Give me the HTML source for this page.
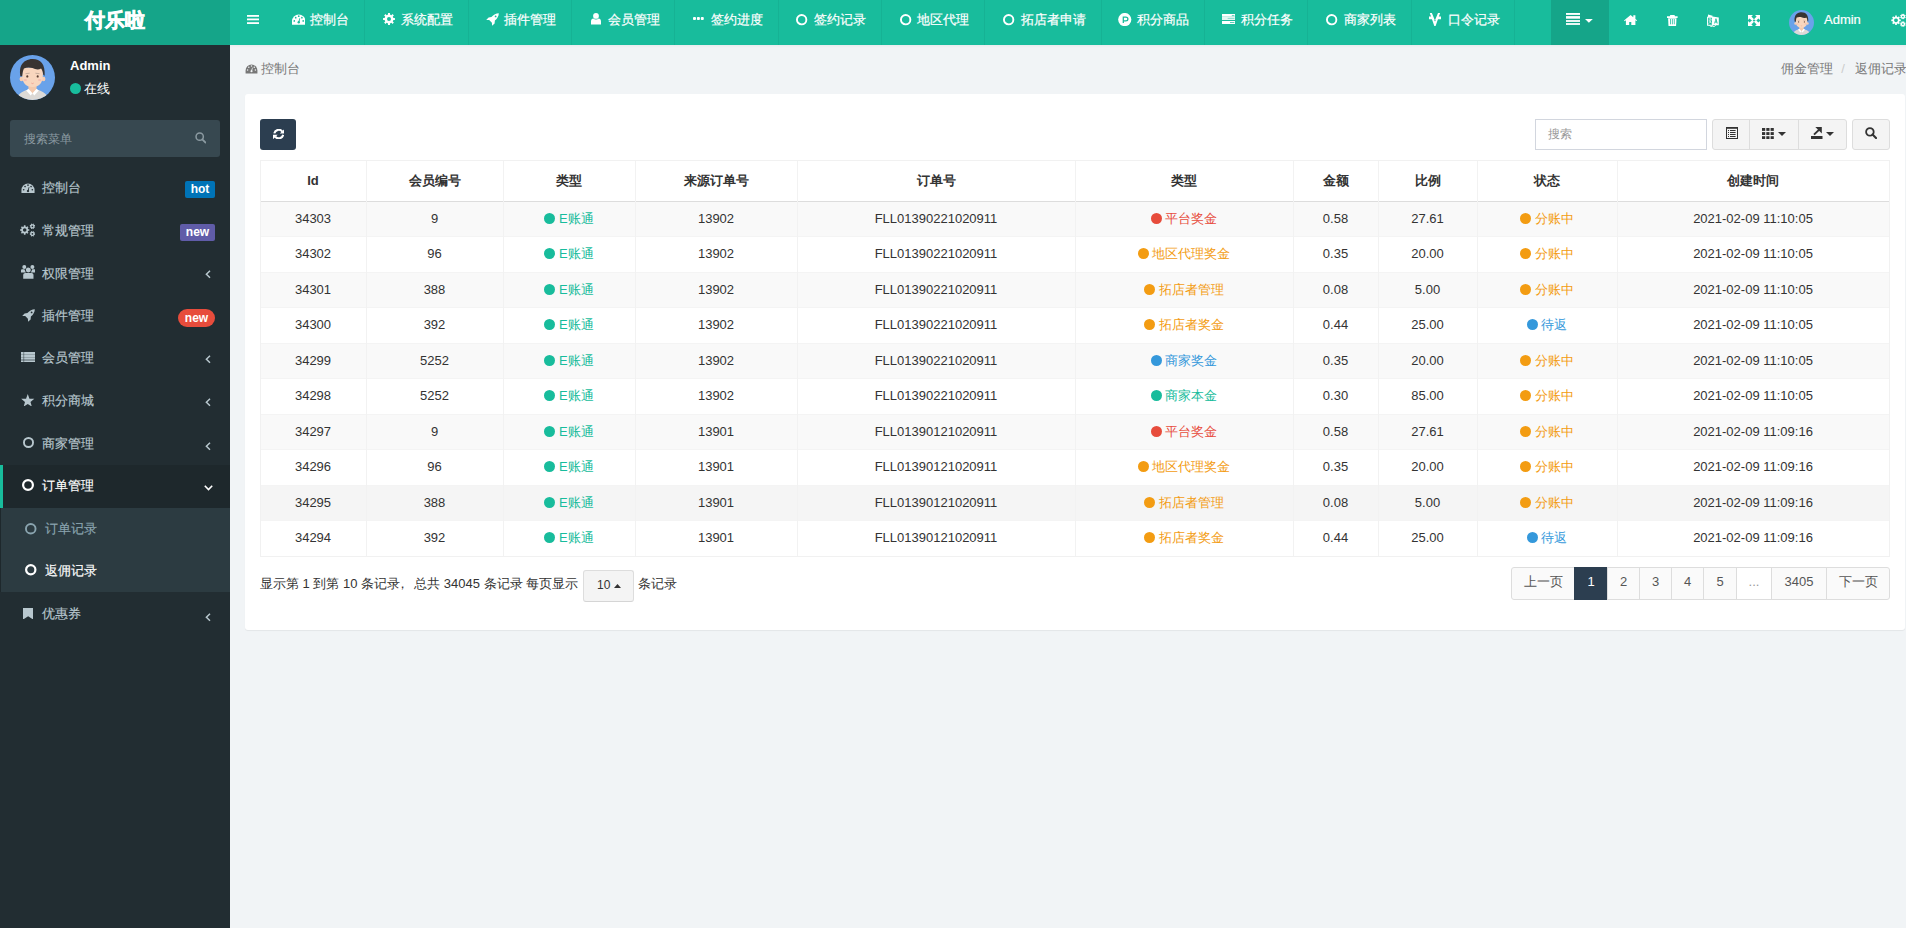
<!DOCTYPE html><html><head><meta charset="utf-8"><style>*{box-sizing:border-box;margin:0;padding:0}
html,body{width:1906px;height:928px;overflow:hidden}
body{font-family:"Liberation Sans",sans-serif;font-size:13px;color:#333;background:#f1f4f6;position:relative;line-height:1.42857}
.abs{position:absolute}
svg.abs{position:absolute;display:block}
#logo{-webkit-text-stroke:0.7px #fff;position:absolute;left:0;top:0;width:230px;height:45px;background:#15a589;color:#fff;font-size:20px;font-weight:bold;text-align:center;line-height:41px}
#nav{position:absolute;left:230px;top:0;width:1676px;height:45px;background:#18bc9c}
.sep{position:absolute;top:0;width:1px;height:45px;background:rgba(0,0,0,0.05)}
.nt{-webkit-text-stroke:0.2px currentColor;position:absolute;top:11.6px;color:#fff;line-height:15px;white-space:nowrap}
#side{position:absolute;left:0;top:45px;width:230px;height:883px;background:#222d32}
.mt{-webkit-text-stroke:0.15px currentColor;position:absolute;left:42px;color:#b8c7ce;line-height:16px;white-space:nowrap}
.lbl{position:absolute;height:17px;color:#fff;font-weight:bold;font-size:12px;line-height:17px;border-radius:2px;text-align:center}
.badge{position:absolute;height:18px;color:#fff;font-weight:bold;font-size:12px;line-height:18px;border-radius:9px;text-align:center}
#panel{position:absolute;left:245px;top:94px;width:1660px;height:536px;background:#fff;border-radius:3px;box-shadow:0 1px 1px rgba(0,0,0,.06)}
table{border-collapse:collapse;table-layout:fixed;position:absolute;left:260px;top:160px;width:1630px}
th,td{text-align:center;border:1px solid #f0f0f0;white-space:nowrap;padding:0}
th{height:42px;font-weight:bold;border-bottom:2px solid #ddd;line-height:15px}
td{height:35.57px;line-height:15px}
tbody tr:nth-child(odd) td{background:#f9f9f9}
.dot{display:inline-block;width:11px;height:11px;border-radius:50%;margin-right:3.6px;vertical-align:-1px}
.s{color:#18bc9c}.s .dot{background:#18bc9c}
.d{color:#e74c3c}.d .dot{background:#e74c3c}
.w{color:#f39c12}.w .dot{background:#f39c12}
.i{color:#3498db}.i .dot{background:#3498db}
.btn{position:absolute;border:1px solid #ddd;background:#f4f4f4;border-radius:3px}
.pg{position:absolute;top:567px;height:33px;border:1px solid #ddd;background:#fafafa;color:#555;text-align:center;line-height:28px}
.th{position:absolute;top:173px;text-align:center;font-weight:bold;line-height:15px;white-space:nowrap}
.td{position:absolute;text-align:center;line-height:15px;white-space:nowrap}
</style></head><body><div id="logo">付乐啦</div><div id="nav"></div><svg class="abs" style="left:247px;top:15px" width="12" height="10" viewBox="0 0 12 10" fill="#fff"><rect x="0" y="0" width="12" height="1.8"/><rect x="0" y="3.5" width="12" height="1.8"/><rect x="0" y="7.2" width="12" height="1.8"/></svg><div class="sep" style="left:364px"></div><svg class="abs" style="left:291.7px;top:14.2px" width="13.5" height="10.7" viewBox="0 0 13.5 10.7" fill="#fff"><path d="M0 10.7V7.3A6.75 6.75 0 0 1 13.5 7.3V10.7z"/><g fill="#18bc9c"><circle cx="6.75" cy="2.2" r="0.85"/><circle cx="3.7" cy="3.7" r="0.85"/><circle cx="9.9" cy="3.7" r="0.85"/><circle cx="2.3" cy="6.9" r="0.85"/><circle cx="11.2" cy="6.9" r="0.85"/><circle cx="6.75" cy="8.3" r="1.2"/><path d="M6.2 8.1L7.6 4 8.2 4.2 7.3 8.5z"/></g></svg><div class="nt" style="left:310px">控制台</div><div class="sep" style="left:468px"></div><svg class="abs" style="left:382.7px;top:13.4px" width="12" height="12" viewBox="0 0 12 12" fill="#fff"><path fill-rule="evenodd" d="M5.01 0.08 L6.99 0.08 L6.95 1.60 L8.44 2.22 L9.49 1.12 L10.88 2.51 L9.78 3.56 L10.40 5.05 L11.92 5.01 L11.92 6.99 L10.40 6.95 L9.78 8.44 L10.88 9.49 L9.49 10.88 L8.44 9.78 L6.95 10.40 L6.99 11.92 L5.01 11.92 L5.05 10.40 L3.56 9.78 L2.51 10.88 L1.12 9.49 L2.22 8.44 L1.60 6.95 L0.08 6.99 L0.08 5.01 L1.60 5.05 L2.22 3.56 L1.12 2.51 L2.51 1.12 L3.56 2.22 L5.05 1.60Z M6.00 4.00A2.0 2.0 0 1 0 6.00 8.00A2.0 2.0 0 1 0 6.00 4.00Z"/></svg><div class="nt" style="left:401px">系统配置</div><div class="sep" style="left:571px"></div><svg class="abs" style="left:486px;top:13.1px" width="13" height="13" viewBox="0 0 13 13" fill="#fff"><path d="M12.8 0.2C10.2 0.2 7.6 1.5 5.4 4.1L2.6 4.4 0.2 6.9 3.2 7.1 5.9 9.8 6.1 12.8 8.6 10.4 8.9 7.6C11.5 5.4 12.8 2.8 12.8 0.2z"/><circle cx="9.6" cy="3.4" r="0.9" fill="#18bc9c"/></svg><div class="nt" style="left:504px">插件管理</div><div class="sep" style="left:674px"></div><svg class="abs" style="left:591px;top:13.3px" width="10" height="11.5" viewBox="0 0 10 11.5" fill="#fff"><circle cx="5" cy="2.9" r="2.9"/><path d="M0 11.5V8.6C0 6.8 1 5.7 2.3 5.6 3 6.2 4 6.5 5 6.5S7 6.2 7.7 5.6C9 5.7 10 6.8 10 8.6V11.5z"/></svg><div class="nt" style="left:608px">会员管理</div><div class="sep" style="left:778px"></div><svg class="abs" style="left:693px;top:17.1px" width="11" height="3" viewBox="0 0 11 3" fill="#fff"><rect x="0" y="0" width="3" height="3" rx=".9"/><rect x="3.9" y="0" width="3" height="3" rx=".9"/><rect x="7.8" y="0" width="3" height="3" rx=".9"/></svg><div class="nt" style="left:711px">签约进度</div><div class="sep" style="left:881px"></div><svg class="abs" style="left:795.35px;top:12.60px" width="13.3" height="13.3" viewBox="0 0 13.3 13.3"><circle cx="6.65" cy="6.65" r="4.70" fill="none" stroke="#fff" stroke-width="1.9"/></svg><div class="nt" style="left:814px">签约记录</div><div class="sep" style="left:984px"></div><svg class="abs" style="left:899.05px;top:12.60px" width="13.3" height="13.3" viewBox="0 0 13.3 13.3"><circle cx="6.65" cy="6.65" r="4.70" fill="none" stroke="#fff" stroke-width="1.9"/></svg><div class="nt" style="left:917px">地区代理</div><div class="sep" style="left:1101px"></div><svg class="abs" style="left:1001.95px;top:12.60px" width="13.3" height="13.3" viewBox="0 0 13.3 13.3"><circle cx="6.65" cy="6.65" r="4.70" fill="none" stroke="#fff" stroke-width="1.9"/></svg><div class="nt" style="left:1021px">拓店者申请</div><div class="sep" style="left:1204px"></div><svg class="abs" style="left:1118.2px;top:12.7px" width="13.5" height="13.2" viewBox="0 0 13.5 13.2" fill="#fff"><circle cx="6.75" cy="6.55" r="6.6"/><path fill="none" stroke="#18bc9c" stroke-width="1.25" d="M5.3 10V4.1H7.8C9.1 4.1 9.9 4.8 9.9 6S9.1 7.9 7.8 7.9H5.3"/></svg><div class="nt" style="left:1137px">积分商品</div><div class="sep" style="left:1307px"></div><svg class="abs" style="left:1221.7px;top:13.9px" width="13.5" height="10" viewBox="0 0 13.5 10" fill="#fff"><rect x="0" y="0" width="13.5" height="2.2"/><rect x="0" y="2.2" width="13.5" height="3.8" opacity=".88"/><rect x="0" y="7" width="13.5" height="3"/><g fill="#18bc9c" opacity=".8"><rect x="9.8" y="1.2" width="2.6" height="0.9"/><rect x="5.7" y="3.9" width="6.7" height="0.9" opacity=".6"/><rect x="8" y="8.1" width="4.4" height="0.9"/></g></svg><div class="nt" style="left:1240.5px">积分任务</div><div class="sep" style="left:1411px"></div><svg class="abs" style="left:1324.85px;top:12.60px" width="13.3" height="13.3" viewBox="0 0 13.3 13.3"><circle cx="6.65" cy="6.65" r="4.70" fill="none" stroke="#fff" stroke-width="1.9"/></svg><div class="nt" style="left:1344px">商家列表</div><div class="sep" style="left:1514px"></div><svg class="abs" style="left:1429px;top:12.7px" width="12" height="13" viewBox="0 0 12 13" fill="#fff"><path d="M0.8 0H2.9L5.9 7.5 9 0H11.1L6.6 12.9H5.3z"/><path d="M0 3.4H3.6L4.5 6.3H0zM12 3.4H8.4L7.5 6.3H12z"/><path d="M0.9 0.3L2.6 0 2.9 1 1.6 1.6z"/><circle cx="6" cy="7.6" r=".7" fill="#18bc9c"/></svg><div class="nt" style="left:1448px">口令记录</div><div class="abs" style="left:1551px;top:0;width:58px;height:45px;background:#15a589"></div><svg class="abs" style="left:1566px;top:13px" width="14" height="12" viewBox="0 0 14 12" fill="#fff"><rect x="0" y="0" width="14" height="1.9"/><rect x="0" y="3.1" width="14" height="2.6"/><rect x="0" y="7.1" width="14" height="1.8"/><rect x="0" y="10.1" width="14" height="1.8"/></svg><svg class="abs" style="left:1585px;top:19px" width="7.8" height="3.8" viewBox="0 0 7.8 3.8" fill="#fff"><path d="M0 0H7.8L3.9 3.8z"/></svg><svg class="abs" style="left:1624px;top:14.9px" width="13.1" height="10" viewBox="0 0 13.1 10" fill="#fff"><path d="M6.6 0L0 5.4 0.7 6.2 1.9 5.2V10H5.2V6.9H7.3V10H11.4V5.2L12.4 6.1 13.1 5.3 11.4 3.9V0.2H9.3V2.2z"/></svg><svg class="abs" style="left:1667px;top:15px" width="10.6" height="11" viewBox="0 0 10.6 11" fill="#fff"><path d="M3.3 0H7.5L8 1.3H10.6V3H0V1.3H2.8z"/><path d="M1.1 3.2H9.5L9.1 11H1.5z"/><g fill="#18bc9c" opacity=".75"><rect x="3" y="4" width="1" height="5.3"/><rect x="4.9" y="4" width="1" height="5.3"/><rect x="6.8" y="4" width="1" height="5.3"/></g></svg><svg class="abs" style="left:1707px;top:13.9px" width="12" height="13" viewBox="0 0 12 13" fill="#fff"><path d="M1 0.5L5.6 1.8 5.4 3H0.9z" /><path d="M5.5 2.6L11.8 3.4V11.3H5.5z"/><path d="M0.6 3.3H5.5V11.3H0.6z" fill="none" stroke="#fff" stroke-width="1.1"/><path d="M7.2 9.6L8.5 4.4H9.4L10.7 9.6H9.8L9.5 8.4H8.3L8 9.6zM8.5 7.5H9.3L8.9 5.7z" fill="#18bc9c"/><path d="M1.9 5H4.4M3.1 4.4V5M2.2 6.1C2.6 7.7 3.5 8.6 4.6 9M4.1 5.2C3.9 7 3 8.6 1.8 9.6" fill="none" stroke="#fff" stroke-width=".75"/><path d="M2.6 11.4Q3.2 12.9 5.6 12.8 8 12.7 8.8 11.3" fill="none" stroke="#fff" stroke-width=".9"/></svg><svg class="abs" style="left:1748px;top:14.9px" width="12" height="11" viewBox="0 0 12 11" fill="#fff"><path d="M0 0H5L3.4 1.6 6 4.2 4.2 6 1.6 3.4 0 5zM12 0V5L10.4 3.4 7.8 6 6 4.2 8.6 1.6 7 0zM0 11V6L1.6 7.6 4.2 5 6 6.8 3.4 9.4 5 11zM12 11H7L8.6 9.4 6 6.8 7.8 5 10.4 7.6 12 6z"/></svg><svg class="abs" style="left:1789px;top:10px" width="25" height="25" viewBox="0 0 100 100"><defs><clipPath id="cpa"><circle cx="50" cy="50" r="50"/></clipPath></defs><g clip-path="url(#cpa)"><rect width="100" height="100" fill="#69a2ea"/><path d="M14 100C16 88 26 80 40 77H60C74 80 84 88 86 100z" fill="#dcd9d6"/><path d="M41 68H59V80L50 86 41 80z" fill="#f3c9ad"/><path d="M36 79L41 75 50 85 46 90zM64 79L59 75 50 85 54 90z" fill="#fff"/><ellipse cx="25.5" cy="53.5" rx="4.2" ry="5" fill="#f5cdb2"/><ellipse cx="74.5" cy="53.5" rx="4.2" ry="5" fill="#f5cdb2"/><path d="M27 28V45C27 62 35 71 50 71S73 62 73 45V28z" fill="#f8d6be"/><path d="M23 47C20 30 24 13 46 9 66 7 79 18 77 46L74 44C73 38 72 33 69 30 63 34 56 32 50 29 44 27 37 27 31 30 29 34 28 40 27 47z" fill="#383432"/><ellipse cx="38.5" cy="47.5" rx="2.2" ry="2.6" fill="#5a3e32"/><ellipse cx="61.5" cy="47.5" rx="2.2" ry="2.6" fill="#5a3e32"/><path d="M34.5 41.5L43.5 40.5M65.5 41.5L56.5 40.5" stroke="#9a8a80" stroke-width="1.2"/><ellipse cx="34" cy="55.5" rx="4" ry="2.3" fill="#f4b4ad" opacity=".7"/><ellipse cx="66" cy="55.5" rx="4" ry="2.3" fill="#f4b4ad" opacity=".7"/><path d="M47.5 62.5Q50 64.5 52.5 62.5" fill="none" stroke="#ec9486" stroke-width="1.6"/></g></svg><div class="nt" style="left:1824px">Admin</div><svg class="abs" style="left:1890.5px;top:13px" width="16" height="15" viewBox="0 0 16 15" fill="#fff"><path fill-rule="evenodd" d="M4.16 2.57 L5.84 2.57 L5.81 3.74 L6.94 4.21 L7.74 3.36 L8.94 4.56 L8.09 5.36 L8.56 6.49 L9.73 6.46 L9.73 8.14 L8.56 8.11 L8.09 9.24 L8.94 10.04 L7.74 11.24 L6.94 10.39 L5.81 10.86 L5.84 12.03 L4.16 12.03 L4.19 10.86 L3.06 10.39 L2.26 11.24 L1.06 10.04 L1.91 9.24 L1.44 8.11 L0.27 8.14 L0.27 6.46 L1.44 6.49 L1.91 5.36 L1.06 4.56 L2.26 3.36 L3.06 4.21 L4.19 3.74Z M5.00 5.48A1.8239999999999998 1.8239999999999998 0 1 0 5.00 9.12A1.8239999999999998 1.8239999999999998 0 1 0 5.00 5.48Z M14.73 4.12 L14.34 5.06 L13.75 4.81 L13.21 5.35 L13.46 5.94 L12.52 6.33 L12.28 5.73 L11.52 5.73 L11.28 6.33 L10.34 5.94 L10.59 5.35 L10.05 4.81 L9.46 5.06 L9.07 4.12 L9.67 3.88 L9.67 3.12 L9.07 2.88 L9.46 1.94 L10.05 2.19 L10.59 1.65 L10.34 1.06 L11.28 0.67 L11.52 1.27 L12.28 1.27 L12.52 0.67 L13.46 1.06 L13.21 1.65 L13.75 2.19 L14.34 1.94 L14.73 2.88 L14.13 3.12 L14.13 3.88Z M11.90 2.63A0.87 0.87 0 1 0 11.90 4.37A0.87 0.87 0 1 0 11.90 2.63Z M14.73 11.72 L14.34 12.66 L13.75 12.41 L13.21 12.95 L13.46 13.54 L12.52 13.93 L12.28 13.33 L11.52 13.33 L11.28 13.93 L10.34 13.54 L10.59 12.95 L10.05 12.41 L9.46 12.66 L9.07 11.72 L9.67 11.48 L9.67 10.72 L9.07 10.48 L9.46 9.54 L10.05 9.79 L10.59 9.25 L10.34 8.66 L11.28 8.27 L11.52 8.87 L12.28 8.87 L12.52 8.27 L13.46 8.66 L13.21 9.25 L13.75 9.79 L14.34 9.54 L14.73 10.48 L14.13 10.72 L14.13 11.48Z M11.90 10.23A0.87 0.87 0 1 0 11.90 11.97A0.87 0.87 0 1 0 11.90 10.23Z"/></svg><div id="side"></div><svg class="abs" style="left:10px;top:55px" width="45" height="45" viewBox="0 0 100 100"><defs><clipPath id="cpb"><circle cx="50" cy="50" r="50"/></clipPath></defs><g clip-path="url(#cpb)"><rect width="100" height="100" fill="#69a2ea"/><path d="M14 100C16 88 26 80 40 77H60C74 80 84 88 86 100z" fill="#dcd9d6"/><path d="M41 68H59V80L50 86 41 80z" fill="#f3c9ad"/><path d="M36 79L41 75 50 85 46 90zM64 79L59 75 50 85 54 90z" fill="#fff"/><ellipse cx="25.5" cy="53.5" rx="4.2" ry="5" fill="#f5cdb2"/><ellipse cx="74.5" cy="53.5" rx="4.2" ry="5" fill="#f5cdb2"/><path d="M27 28V45C27 62 35 71 50 71S73 62 73 45V28z" fill="#f8d6be"/><path d="M23 47C20 30 24 13 46 9 66 7 79 18 77 46L74 44C73 38 72 33 69 30 63 34 56 32 50 29 44 27 37 27 31 30 29 34 28 40 27 47z" fill="#383432"/><ellipse cx="38.5" cy="47.5" rx="2.2" ry="2.6" fill="#5a3e32"/><ellipse cx="61.5" cy="47.5" rx="2.2" ry="2.6" fill="#5a3e32"/><path d="M34.5 41.5L43.5 40.5M65.5 41.5L56.5 40.5" stroke="#9a8a80" stroke-width="1.2"/><ellipse cx="34" cy="55.5" rx="4" ry="2.3" fill="#f4b4ad" opacity=".7"/><ellipse cx="66" cy="55.5" rx="4" ry="2.3" fill="#f4b4ad" opacity=".7"/><path d="M47.5 62.5Q50 64.5 52.5 62.5" fill="none" stroke="#ec9486" stroke-width="1.6"/></g></svg><div class="abs" style="left:70px;top:58px;color:#fff;font-weight:bold;font-size:13px;line-height:16px">Admin</div><div class="abs" style="left:70px;top:82.5px;width:11px;height:11px;border-radius:50%;background:#18bc9c"></div><div class="abs" style="left:84px;top:81px;color:#fff;line-height:16px">在线</div><div class="abs" style="left:10px;top:120px;width:210px;height:37px;background:#374850;border-radius:3px"></div><div class="abs" style="left:24px;top:131px;color:#8b9aa1;font-size:12px;line-height:16px">搜索菜单</div><svg class="abs" style="left:194.5px;top:132.4px" width="11.5" height="11.5" viewBox="0 0 12 12"><circle cx="4.9" cy="4.9" r="3.8" fill="none" stroke="#8b9aa1" stroke-width="1.6"/><path d="M7.6 7.6L11 11" stroke="#8b9aa1" stroke-width="1.9000000000000001" stroke-linecap="round"/></svg><div class="mt" style="top:180px;left:42px">控制台</div><svg class="abs" style="left:20.9px;top:182.6px" width="14" height="10.4" viewBox="0 0 13.5 10.7" fill="#b8c7ce"><path d="M0 10.7V7.3A6.75 6.75 0 0 1 13.5 7.3V10.7z"/><g fill="#222d32"><circle cx="6.75" cy="2.2" r="0.85"/><circle cx="3.7" cy="3.7" r="0.85"/><circle cx="9.9" cy="3.7" r="0.85"/><circle cx="2.3" cy="6.9" r="0.85"/><circle cx="11.2" cy="6.9" r="0.85"/><circle cx="6.75" cy="8.3" r="1.2"/><path d="M6.2 8.1L7.6 4 8.2 4.2 7.3 8.5z"/></g></svg><div class="lbl" style="left:185px;top:181px;width:30px;background:#0073b7">hot</div><div class="mt" style="top:223px;left:42px">常规管理</div><svg class="abs" style="left:20.2px;top:223.2px" width="16" height="15" viewBox="0 0 16 15" fill="#b8c7ce"><path fill-rule="evenodd" d="M3.87 2.37 L5.53 2.37 L5.49 3.52 L6.60 3.98 L7.39 3.14 L8.56 4.31 L7.72 5.10 L8.18 6.21 L9.33 6.17 L9.33 7.83 L8.18 7.79 L7.72 8.90 L8.56 9.69 L7.39 10.86 L6.60 10.02 L5.49 10.48 L5.53 11.63 L3.87 11.63 L3.91 10.48 L2.80 10.02 L2.01 10.86 L0.84 9.69 L1.68 8.90 L1.22 7.79 L0.07 7.83 L0.07 6.17 L1.22 6.21 L1.68 5.10 L0.84 4.31 L2.01 3.14 L2.80 3.98 L3.91 3.52Z M4.70 5.21A1.786 1.786 0 1 0 4.70 8.79A1.786 1.786 0 1 0 4.70 5.21Z M15.13 3.90 L14.76 4.81 L14.18 4.56 L13.66 5.08 L13.91 5.66 L13.00 6.03 L12.77 5.45 L12.03 5.45 L11.80 6.03 L10.89 5.66 L11.14 5.08 L10.62 4.56 L10.04 4.81 L9.67 3.90 L10.25 3.67 L10.25 2.93 L9.67 2.70 L10.04 1.79 L10.62 2.04 L11.14 1.52 L10.89 0.94 L11.80 0.57 L12.03 1.15 L12.77 1.15 L13.00 0.57 L13.91 0.94 L13.66 1.52 L14.18 2.04 L14.76 1.79 L15.13 2.70 L14.55 2.93 L14.55 3.67Z M12.40 2.46A0.84 0.84 0 1 0 12.40 4.14A0.84 0.84 0 1 0 12.40 2.46Z M15.13 11.40 L14.76 12.31 L14.18 12.06 L13.66 12.58 L13.91 13.16 L13.00 13.53 L12.77 12.95 L12.03 12.95 L11.80 13.53 L10.89 13.16 L11.14 12.58 L10.62 12.06 L10.04 12.31 L9.67 11.40 L10.25 11.17 L10.25 10.43 L9.67 10.20 L10.04 9.29 L10.62 9.54 L11.14 9.02 L10.89 8.44 L11.80 8.07 L12.03 8.65 L12.77 8.65 L13.00 8.07 L13.91 8.44 L13.66 9.02 L14.18 9.54 L14.76 9.29 L15.13 10.20 L14.55 10.43 L14.55 11.17Z M12.40 9.96A0.84 0.84 0 1 0 12.40 11.64A0.84 0.84 0 1 0 12.40 9.96Z"/></svg><div class="lbl" style="left:180px;top:224px;width:35px;background:#605ca8">new</div><div class="mt" style="top:266px;left:42px">权限管理</div><svg class="abs" style="left:20.5px;top:265.4px" width="14.7" height="13.7" viewBox="0 0 14.7 13.7" fill="#b8c7ce"><circle cx="3.3" cy="2.1" r="2"/><circle cx="11.4" cy="2.1" r="2"/><circle cx="7.35" cy="4.9" r="2.5"/><path d="M0 7.6V5.6C0 4.7.6 4.3 1.2 4.3H3.4C3.9 5.5 4.4 6.4 4.9 7.6z"/><path d="M14.7 7.6V5.6C14.7 4.7 14.1 4.3 13.5 4.3H11.3C10.8 5.5 10.3 6.4 9.8 7.6z"/><path d="M2.2 13.7V10C2.2 8.6 3.1 7.9 4.2 7.9H10.5C11.6 7.9 12.5 8.6 12.5 10V13.7z"/></svg><svg class="abs" style="left:205px;top:270px" width="6" height="9" viewBox="0 0 6 9"><path d="M5 0.8L1.4 4.3 5 7.8" fill="none" stroke="#b8c7ce" stroke-width="1.5"/></svg><div class="mt" style="top:308px;left:42px">插件管理</div><svg class="abs" style="left:21.8px;top:309.2px" width="13" height="13" viewBox="0 0 13 13" fill="#b8c7ce"><path d="M12.8 0.2C10.2 0.2 7.6 1.5 5.4 4.1L2.6 4.4 0.2 6.9 3.2 7.1 5.9 9.8 6.1 12.8 8.6 10.4 8.9 7.6C11.5 5.4 12.8 2.8 12.8 0.2z"/><circle cx="9.6" cy="3.4" r="0.9" fill="#222d32"/></svg><div class="badge" style="left:178px;top:309px;width:37px;background:#e74c3c">new</div><div class="mt" style="top:350px;left:42px">会员管理</div><svg class="abs" style="left:21px;top:351.7px" width="14" height="10.3" viewBox="0 0 14 10.3" fill="#b8c7ce"><rect x="0" y="0" width="14" height="10.3"/><g fill="#222d32" opacity=".45"><rect x="0" y="2.3" width="14" height=".5"/><rect x="0" y="5.2" width="14" height=".5"/></g><rect x="0" y="7.6" width="14" height=".8" fill="#222d32" opacity=".8"/><rect x="2.3" y="0" width=".9" height="10.3" fill="#222d32" opacity=".5"/></svg><svg class="abs" style="left:205px;top:355px" width="6" height="9" viewBox="0 0 6 9"><path d="M5 0.8L1.4 4.3 5 7.8" fill="none" stroke="#b8c7ce" stroke-width="1.5"/></svg><div class="mt" style="top:393px;left:42px">积分商城</div><svg class="abs" style="left:21.2px;top:393.6px" width="13.5" height="12.5" viewBox="0 0 13.5 12.5" fill="#b8c7ce"><path d="M6.75 0.10 L8.45 4.65 L13.31 4.87 L9.51 7.90 L10.81 12.58 L6.75 9.90 L2.69 12.58 L3.99 7.90 L0.19 4.87 L5.05 4.65Z"/></svg><svg class="abs" style="left:205px;top:397.5px" width="6" height="9" viewBox="0 0 6 9"><path d="M5 0.8L1.4 4.3 5 7.8" fill="none" stroke="#b8c7ce" stroke-width="1.5"/></svg><div class="mt" style="top:436px;left:42px">商家管理</div><svg class="abs" style="left:21.50px;top:436.20px" width="13" height="13" viewBox="0 0 13 13"><circle cx="6.5" cy="6.5" r="4.55" fill="none" stroke="#b8c7ce" stroke-width="1.9"/></svg><svg class="abs" style="left:205px;top:441.5px" width="6" height="9" viewBox="0 0 6 9"><path d="M5 0.8L1.4 4.3 5 7.8" fill="none" stroke="#b8c7ce" stroke-width="1.5"/></svg><div class="abs" style="left:0;top:465px;width:230px;height:43px;background:#1e282c"></div><div class="abs" style="left:0;top:465px;width:3px;height:43px;background:#18bc9c"></div><div class="mt" style="top:478px;left:42px;color:#fff">订单管理</div><svg class="abs" style="left:21.00px;top:478.00px" width="14" height="14" viewBox="0 0 14 14"><circle cx="7.0" cy="7.0" r="4.90" fill="none" stroke="#fff" stroke-width="2.2"/></svg><svg class="abs" style="left:203.5px;top:484.5px" width="9" height="6" viewBox="0 0 9 6"><path d="M0.8 0.8L4.5 4.5 8.2 0.8" fill="none" stroke="#fff" stroke-width="1.6"/></svg><div class="abs" style="left:0;top:508px;width:230px;height:84px;background:#2c3b41"></div><div class="abs" style="left:0;top:508px;width:1px;height:84px;background:#1e282c"></div><div class="mt" style="top:521px;left:45px;color:#8aa4af">订单记录</div><svg class="abs" style="left:24.05px;top:521.95px" width="13.5" height="13.5" viewBox="0 0 13.5 13.5"><circle cx="6.75" cy="6.75" r="4.80" fill="none" stroke="#8aa4af" stroke-width="1.9"/></svg><div class="mt" style="top:563px;left:45px;color:#fff">返佣记录</div><svg class="abs" style="left:24.05px;top:562.95px" width="13.5" height="13.5" viewBox="0 0 13.5 13.5"><circle cx="6.75" cy="6.75" r="4.65" fill="none" stroke="#fff" stroke-width="2.2"/></svg><div class="mt" style="top:606px;left:42px">优惠券</div><svg class="abs" style="left:22.7px;top:607.5px" width="10.3" height="11.6" viewBox="0 0 10.3 11.6" fill="#b8c7ce"><path d="M0 0H10.3V11.6L5.15 8.3 0 11.6z"/></svg><svg class="abs" style="left:205px;top:612.5px" width="6" height="9" viewBox="0 0 6 9"><path d="M5 0.8L1.4 4.3 5 7.8" fill="none" stroke="#b8c7ce" stroke-width="1.5"/></svg><svg class="abs" style="left:245px;top:64.3px" width="13" height="9.4" viewBox="0 0 13.5 10.7" fill="#777"><path d="M0 10.7V7.3A6.75 6.75 0 0 1 13.5 7.3V10.7z"/><g fill="#f1f4f6"><circle cx="6.75" cy="2.2" r="0.85"/><circle cx="3.7" cy="3.7" r="0.85"/><circle cx="9.9" cy="3.7" r="0.85"/><circle cx="2.3" cy="6.9" r="0.85"/><circle cx="11.2" cy="6.9" r="0.85"/><circle cx="6.75" cy="8.3" r="1.2"/><path d="M6.2 8.1L7.6 4 8.2 4.2 7.3 8.5z"/></g></svg><div class="abs" style="left:261px;top:61px;color:#777;line-height:16px">控制台</div><div class="abs" style="left:1780.5px;top:60.5px;color:#777;line-height:16px;white-space:nowrap">佣金管理<span style="color:#ccc;padding:0 10px 0 8.7px">/</span>返佣记录</div><div class="abs" style="left:230px;top:45px;width:1676px;height:3px;background:linear-gradient(rgba(0,0,0,.035),rgba(0,0,0,0))"></div><div id="panel"></div><div class="abs" style="left:260px;top:119px;width:36px;height:31px;background:#2c3e50;border-radius:3px"></div><svg class="abs" style="left:272.6px;top:128.6px" width="11.5" height="10.4" viewBox="0 0 11.5 10.4" fill="#fff"><path d="M1.3 4.4A4.5 4.5 0 0 1 9.3 2.6" fill="none" stroke="#fff" stroke-width="2.1"/><path d="M6.8 4.4H11.5V0z"/><path d="M10.2 5.8A4.5 4.5 0 0 1 2.2 7.6" fill="none" stroke="#fff" stroke-width="2.1"/><path d="M4.7 5.8H0V10.2z"/></svg><div class="abs" style="left:1535px;top:119px;width:172px;height:31px;border:1px solid #d2d6de;background:#fff"></div><div class="abs" style="left:1548px;top:126px;color:#999;font-size:12px;line-height:16px">搜索</div><div class="btn" style="left:1712px;top:119px;width:135px;height:31px"></div><div class="abs" style="left:1749px;top:120px;width:1px;height:29px;background:#ddd"></div><div class="abs" style="left:1798px;top:120px;width:1px;height:29px;background:#ddd"></div><svg class="abs" style="left:1726px;top:127px" width="12" height="12" viewBox="0 0 12 12" fill="#333"><rect x=".5" y=".5" width="11" height="11" fill="none" stroke="#333" stroke-width="1"/><rect x="0" y="0" width="12" height="1.8"/><rect x="2" y="3" width="1" height="1"/><rect x="4" y="3" width="5.6" height="1"/><rect x="2" y="5" width="1" height="1"/><rect x="4" y="5" width="5.6" height="1"/><rect x="2" y="7" width="1" height="1"/><rect x="4" y="7" width="5.6" height="1"/><rect x="2" y="9" width="1" height="1"/><rect x="4" y="9" width="5.6" height="1"/></svg><svg class="abs" style="left:1762px;top:128px" width="12" height="11" viewBox="0 0 12 11" fill="#333"><rect x="0.0" y="0.0" width="3.2" height="2.9"/><rect x="0.0" y="4.1" width="3.2" height="2.9"/><rect x="0.0" y="8.2" width="3.2" height="2.9"/><rect x="4.3" y="0.0" width="3.2" height="2.9"/><rect x="4.3" y="4.1" width="3.2" height="2.9"/><rect x="4.3" y="8.2" width="3.2" height="2.9"/><rect x="8.6" y="0.0" width="3.2" height="2.9"/><rect x="8.6" y="4.1" width="3.2" height="2.9"/><rect x="8.6" y="8.2" width="3.2" height="2.9"/></svg><svg class="abs" style="left:1778px;top:132px" width="8" height="4" viewBox="0 0 8 4" fill="#333"><path d="M0 0H8L4.0 4z"/></svg><svg class="abs" style="left:1810.6px;top:127px" width="12" height="12" viewBox="0 0 12 12" fill="#333"><rect x="0" y="9" width="11.5" height="3"/><path d="M4.3 0H10.8V6.5z"/><path d="M8.2 2.6L3 7.6" stroke="#333" stroke-width="2"/></svg><svg class="abs" style="left:1826.3px;top:132px" width="8" height="4" viewBox="0 0 8 4" fill="#333"><path d="M0 0H8L4.0 4z"/></svg><div class="btn" style="left:1852px;top:119px;width:38px;height:31px"></div><svg class="abs" style="left:1865.2px;top:127px" width="12" height="12" viewBox="0 0 12 12"><circle cx="4.9" cy="4.9" r="3.8" fill="none" stroke="#333" stroke-width="1.8"/><path d="M7.6 7.6L11 11" stroke="#333" stroke-width="2.1" stroke-linecap="round"/></svg><div class="abs" style="left:260px;top:160px;width:1630px;height:397px;border:1px solid #f1f1f1;background:#fff"></div><div class="abs" style="left:261px;top:202px;width:1628px;height:34px;background:#f9f9f9"></div><div class="abs" style="left:261px;top:236px;width:1628px;height:1px;background:#f4f4f4"></div><div class="abs" style="left:261px;top:272px;width:1628px;height:1px;background:#f4f4f4"></div><div class="abs" style="left:261px;top:273px;width:1628px;height:34px;background:#f9f9f9"></div><div class="abs" style="left:261px;top:307px;width:1628px;height:1px;background:#f4f4f4"></div><div class="abs" style="left:261px;top:343px;width:1628px;height:1px;background:#f4f4f4"></div><div class="abs" style="left:261px;top:344px;width:1628px;height:34px;background:#f9f9f9"></div><div class="abs" style="left:261px;top:378px;width:1628px;height:1px;background:#f4f4f4"></div><div class="abs" style="left:261px;top:414px;width:1628px;height:1px;background:#f4f4f4"></div><div class="abs" style="left:261px;top:415px;width:1628px;height:34px;background:#f9f9f9"></div><div class="abs" style="left:261px;top:449px;width:1628px;height:1px;background:#f4f4f4"></div><div class="abs" style="left:261px;top:485px;width:1628px;height:1px;background:#f4f4f4"></div><div class="abs" style="left:261px;top:486px;width:1628px;height:34px;background:#f5f5f5"></div><div class="abs" style="left:261px;top:520px;width:1628px;height:1px;background:#f4f4f4"></div><div class="abs" style="left:261px;top:201px;width:1628px;height:1px;background:#ddd"></div><div class="abs" style="left:366px;top:161px;width:1px;height:395px;background:#f2f2f2"></div><div class="abs" style="left:503px;top:161px;width:1px;height:395px;background:#f2f2f2"></div><div class="abs" style="left:635px;top:161px;width:1px;height:395px;background:#f2f2f2"></div><div class="abs" style="left:797px;top:161px;width:1px;height:395px;background:#f2f2f2"></div><div class="abs" style="left:1075px;top:161px;width:1px;height:395px;background:#f2f2f2"></div><div class="abs" style="left:1293px;top:161px;width:1px;height:395px;background:#f2f2f2"></div><div class="abs" style="left:1378px;top:161px;width:1px;height:395px;background:#f2f2f2"></div><div class="abs" style="left:1477px;top:161px;width:1px;height:395px;background:#f2f2f2"></div><div class="abs" style="left:1617px;top:161px;width:1px;height:395px;background:#f2f2f2"></div><div class="th" style="left:260px;width:106px">Id</div><div class="th" style="left:366px;width:137px">会员编号</div><div class="th" style="left:503px;width:132px">类型</div><div class="th" style="left:635px;width:162px">来源订单号</div><div class="th" style="left:797px;width:278px">订单号</div><div class="th" style="left:1075px;width:218px">类型</div><div class="th" style="left:1293px;width:85px">金额</div><div class="th" style="left:1378px;width:99px">比例</div><div class="th" style="left:1477px;width:140px">状态</div><div class="th" style="left:1617px;width:272px">创建时间</div><div class="td" style="left:260px;width:106px;top:211px">34303</div><div class="td" style="left:366px;width:137px;top:211px">9</div><div class="td" style="left:503px;width:132px;top:211px"><span class="s"><i class="dot"></i>E账通</span></div><div class="td" style="left:635px;width:162px;top:211px">13902</div><div class="td" style="left:797px;width:278px;top:211px">FLL01390221020911</div><div class="td" style="left:1075px;width:218px;top:211px"><span class="d"><i class="dot"></i>平台奖金</span></div><div class="td" style="left:1293px;width:85px;top:211px">0.58</div><div class="td" style="left:1378px;width:99px;top:211px">27.61</div><div class="td" style="left:1477px;width:140px;top:211px"><span class="w"><i class="dot"></i>分账中</span></div><div class="td" style="left:1617px;width:272px;top:211px">2021-02-09 11:10:05</div><div class="td" style="left:260px;width:106px;top:246px">34302</div><div class="td" style="left:366px;width:137px;top:246px">96</div><div class="td" style="left:503px;width:132px;top:246px"><span class="s"><i class="dot"></i>E账通</span></div><div class="td" style="left:635px;width:162px;top:246px">13902</div><div class="td" style="left:797px;width:278px;top:246px">FLL01390221020911</div><div class="td" style="left:1075px;width:218px;top:246px"><span class="w"><i class="dot"></i>地区代理奖金</span></div><div class="td" style="left:1293px;width:85px;top:246px">0.35</div><div class="td" style="left:1378px;width:99px;top:246px">20.00</div><div class="td" style="left:1477px;width:140px;top:246px"><span class="w"><i class="dot"></i>分账中</span></div><div class="td" style="left:1617px;width:272px;top:246px">2021-02-09 11:10:05</div><div class="td" style="left:260px;width:106px;top:282px">34301</div><div class="td" style="left:366px;width:137px;top:282px">388</div><div class="td" style="left:503px;width:132px;top:282px"><span class="s"><i class="dot"></i>E账通</span></div><div class="td" style="left:635px;width:162px;top:282px">13902</div><div class="td" style="left:797px;width:278px;top:282px">FLL01390221020911</div><div class="td" style="left:1075px;width:218px;top:282px"><span class="w"><i class="dot"></i>拓店者管理</span></div><div class="td" style="left:1293px;width:85px;top:282px">0.08</div><div class="td" style="left:1378px;width:99px;top:282px">5.00</div><div class="td" style="left:1477px;width:140px;top:282px"><span class="w"><i class="dot"></i>分账中</span></div><div class="td" style="left:1617px;width:272px;top:282px">2021-02-09 11:10:05</div><div class="td" style="left:260px;width:106px;top:317px">34300</div><div class="td" style="left:366px;width:137px;top:317px">392</div><div class="td" style="left:503px;width:132px;top:317px"><span class="s"><i class="dot"></i>E账通</span></div><div class="td" style="left:635px;width:162px;top:317px">13902</div><div class="td" style="left:797px;width:278px;top:317px">FLL01390221020911</div><div class="td" style="left:1075px;width:218px;top:317px"><span class="w"><i class="dot"></i>拓店者奖金</span></div><div class="td" style="left:1293px;width:85px;top:317px">0.44</div><div class="td" style="left:1378px;width:99px;top:317px">25.00</div><div class="td" style="left:1477px;width:140px;top:317px"><span class="i"><i class="dot"></i>待返</span></div><div class="td" style="left:1617px;width:272px;top:317px">2021-02-09 11:10:05</div><div class="td" style="left:260px;width:106px;top:353px">34299</div><div class="td" style="left:366px;width:137px;top:353px">5252</div><div class="td" style="left:503px;width:132px;top:353px"><span class="s"><i class="dot"></i>E账通</span></div><div class="td" style="left:635px;width:162px;top:353px">13902</div><div class="td" style="left:797px;width:278px;top:353px">FLL01390221020911</div><div class="td" style="left:1075px;width:218px;top:353px"><span class="i"><i class="dot"></i>商家奖金</span></div><div class="td" style="left:1293px;width:85px;top:353px">0.35</div><div class="td" style="left:1378px;width:99px;top:353px">20.00</div><div class="td" style="left:1477px;width:140px;top:353px"><span class="w"><i class="dot"></i>分账中</span></div><div class="td" style="left:1617px;width:272px;top:353px">2021-02-09 11:10:05</div><div class="td" style="left:260px;width:106px;top:388px">34298</div><div class="td" style="left:366px;width:137px;top:388px">5252</div><div class="td" style="left:503px;width:132px;top:388px"><span class="s"><i class="dot"></i>E账通</span></div><div class="td" style="left:635px;width:162px;top:388px">13902</div><div class="td" style="left:797px;width:278px;top:388px">FLL01390221020911</div><div class="td" style="left:1075px;width:218px;top:388px"><span class="s"><i class="dot"></i>商家本金</span></div><div class="td" style="left:1293px;width:85px;top:388px">0.30</div><div class="td" style="left:1378px;width:99px;top:388px">85.00</div><div class="td" style="left:1477px;width:140px;top:388px"><span class="w"><i class="dot"></i>分账中</span></div><div class="td" style="left:1617px;width:272px;top:388px">2021-02-09 11:10:05</div><div class="td" style="left:260px;width:106px;top:424px">34297</div><div class="td" style="left:366px;width:137px;top:424px">9</div><div class="td" style="left:503px;width:132px;top:424px"><span class="s"><i class="dot"></i>E账通</span></div><div class="td" style="left:635px;width:162px;top:424px">13901</div><div class="td" style="left:797px;width:278px;top:424px">FLL01390121020911</div><div class="td" style="left:1075px;width:218px;top:424px"><span class="d"><i class="dot"></i>平台奖金</span></div><div class="td" style="left:1293px;width:85px;top:424px">0.58</div><div class="td" style="left:1378px;width:99px;top:424px">27.61</div><div class="td" style="left:1477px;width:140px;top:424px"><span class="w"><i class="dot"></i>分账中</span></div><div class="td" style="left:1617px;width:272px;top:424px">2021-02-09 11:09:16</div><div class="td" style="left:260px;width:106px;top:459px">34296</div><div class="td" style="left:366px;width:137px;top:459px">96</div><div class="td" style="left:503px;width:132px;top:459px"><span class="s"><i class="dot"></i>E账通</span></div><div class="td" style="left:635px;width:162px;top:459px">13901</div><div class="td" style="left:797px;width:278px;top:459px">FLL01390121020911</div><div class="td" style="left:1075px;width:218px;top:459px"><span class="w"><i class="dot"></i>地区代理奖金</span></div><div class="td" style="left:1293px;width:85px;top:459px">0.35</div><div class="td" style="left:1378px;width:99px;top:459px">20.00</div><div class="td" style="left:1477px;width:140px;top:459px"><span class="w"><i class="dot"></i>分账中</span></div><div class="td" style="left:1617px;width:272px;top:459px">2021-02-09 11:09:16</div><div class="td" style="left:260px;width:106px;top:495px">34295</div><div class="td" style="left:366px;width:137px;top:495px">388</div><div class="td" style="left:503px;width:132px;top:495px"><span class="s"><i class="dot"></i>E账通</span></div><div class="td" style="left:635px;width:162px;top:495px">13901</div><div class="td" style="left:797px;width:278px;top:495px">FLL01390121020911</div><div class="td" style="left:1075px;width:218px;top:495px"><span class="w"><i class="dot"></i>拓店者管理</span></div><div class="td" style="left:1293px;width:85px;top:495px">0.08</div><div class="td" style="left:1378px;width:99px;top:495px">5.00</div><div class="td" style="left:1477px;width:140px;top:495px"><span class="w"><i class="dot"></i>分账中</span></div><div class="td" style="left:1617px;width:272px;top:495px">2021-02-09 11:09:16</div><div class="td" style="left:260px;width:106px;top:530px">34294</div><div class="td" style="left:366px;width:137px;top:530px">392</div><div class="td" style="left:503px;width:132px;top:530px"><span class="s"><i class="dot"></i>E账通</span></div><div class="td" style="left:635px;width:162px;top:530px">13901</div><div class="td" style="left:797px;width:278px;top:530px">FLL01390121020911</div><div class="td" style="left:1075px;width:218px;top:530px"><span class="w"><i class="dot"></i>拓店者奖金</span></div><div class="td" style="left:1293px;width:85px;top:530px">0.44</div><div class="td" style="left:1378px;width:99px;top:530px">25.00</div><div class="td" style="left:1477px;width:140px;top:530px"><span class="i"><i class="dot"></i>待返</span></div><div class="td" style="left:1617px;width:272px;top:530px">2021-02-09 11:09:16</div><div class="abs" style="left:260px;top:576px;line-height:16px;white-space:nowrap">显示第 1 到第 10 条记录<span style="position:relative;left:-4px">，</span><span style="margin-left:1px">总共 34045 条记录 每页显示</span></div><div class="btn" style="left:583px;top:570px;width:51px;height:32px;border-bottom-color:#d5d5d5"></div><div class="abs" style="left:597px;top:577px;font-size:12px;line-height:16px">10</div><svg class="abs" style="left:613.5px;top:583.5px" width="7" height="4" viewBox="0 0 7 4" fill="#333"><path d="M0 4H7L3.5 0z"/></svg><div class="abs" style="left:638px;top:576px;line-height:16px">条记录</div><div class="pg" style="left:1511px;width:64px;border-radius:3px 0 0 3px;">上一页</div><div class="pg" style="left:1574px;width:34px;background:#2c3e50;border-color:#2c3e50;color:#fff;">1</div><div class="pg" style="left:1607px;width:33px;">2</div><div class="pg" style="left:1639px;width:33px;">3</div><div class="pg" style="left:1671px;width:33px;">4</div><div class="pg" style="left:1703px;width:34px;">5</div><div class="pg" style="left:1736px;width:36px;background:#fff;color:#999;">...</div><div class="pg" style="left:1771px;width:56px;">3405</div><div class="pg" style="left:1826px;width:64px;border-radius:0 3px 3px 0;">下一页</div></body></html>
